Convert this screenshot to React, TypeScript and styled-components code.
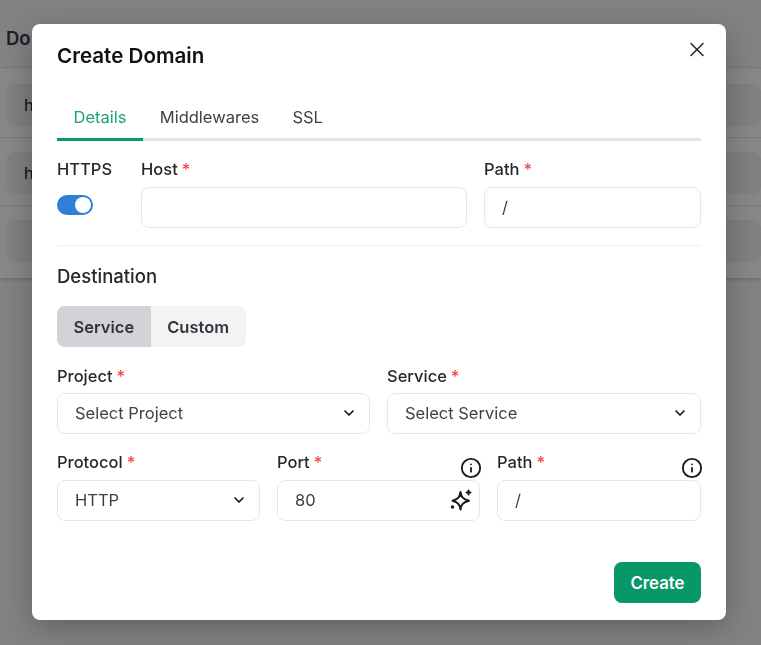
import React from 'react';
import styled, { createGlobalStyle } from 'styled-components';
import { ChevronDown, Info, X } from 'lucide-react';

const GlobalStyle = createGlobalStyle`
  html, body {
    margin: 0;
    height: 100%;
    background: #fff;
    font-family: Inter, "Liberation Sans", sans-serif;
    color: #18181b;
  }
  * { box-sizing: border-box; }
`;

// page behind the dialog, only the part that shows past the modal has text
const Page = styled.div`
  height: 645px;
  overflow: hidden;
  background: #f6f6f6;
  padding-top: 28px;
`;

const PageTitle = styled.h2`
  margin: 0 0 0 6px;
  height: 40px;
  font-size: 18.5px;
  line-height: 20px;
  font-weight: 600;
  color: #3a3a46;
`;

const Panel = styled.div`
  background: #fff;
  height: 210px;
  padding-top: 15px;
  border-top: 1px solid #f0f0f0;
  box-shadow: 0 1px 4px rgba(0, 0, 0, 0.22);
`;

const PanelRow = styled.div`
  display: flex;
  align-items: center;
  height: 42px;
  margin: 0 0 26px 7px;
  padding-left: 17px;
  border-radius: 8px;
  background: #f1f1f2;
  font-size: 16.5px;
  position: relative;

  &::after {
    content: '';
    position: absolute;
    left: -7px;
    right: 0;
    bottom: -12px;
    height: 1px;
    background: #e6e6e6;
  }

  &:last-child::after {
    display: none;
  }
`;

const Overlay = styled.div`
  position: fixed;
  inset: 0;
  background: rgba(0, 0, 0, 0.47);
  display: flex;
  align-items: flex-start;
  justify-content: center;
  padding: 24px 35px 0 32px;
`;

const Modal = styled.div`
  position: relative;
  width: 694px;
  height: 596px;
  padding: 20px 25px 17px;
  background: #fff;
  border-radius: 8px;
  box-shadow: 0 8px 32px rgba(0, 0, 0, 0.28);
  display: flex;
  flex-direction: column;
`;

const Title = styled.h1`
  margin: 0;
  height: 24px;
  font-size: 20.6px;
  line-height: 24px;
  font-weight: 600;
  color: #111114;
`;

const CloseButton = styled.button`
  position: absolute;
  top: 13px;
  right: 17px;
  width: 24px;
  height: 24px;
  padding: 0;
  border: 0;
  background: none;
  display: flex;
  align-items: center;
  justify-content: center;
  color: #222;
`;

const Tabs = styled.div`
  display: flex;
  margin-top: 30px;
  border-bottom: 3px solid #e4e4e6;
  height: 43px;
`;

const Tab = styled.div<{ $active?: boolean }>`
  padding: 0 16.6px 3px;
  margin-bottom: -3px;
  height: 43px;
  display: flex;
  align-items: center;
  font-size: 16.5px;
  color: ${p => (p.$active ? '#1ba672' : '#3f3f46')};
  border-bottom: 3px solid ${p => (p.$active ? '#069868' : 'transparent')};
`;

const TopRow = styled.div`
  display: grid;
  grid-template-columns: 67px 1fr 217px;
  column-gap: 17px;
  margin-top: 16px;
`;

const Field = styled.div`
  position: relative;
  display: flex;
  flex-direction: column;
  min-width: 0;
`;

const Label = styled.label`
  height: 24px;
  margin-bottom: 6px;
  font-size: 16.5px;
  line-height: 24px;
  font-weight: 500;
  color: #27272a;
`;

const Required = styled.span`
  color: #ef4444;
  margin-left: 4px;
`;

const SwitchTrack = styled.div`
  margin-top: 8px;
  width: 36px;
  height: 20px;
  padding: 2px;
  border-radius: 10px;
  background: #2f7fd6;
  display: flex;
  justify-content: flex-end;
`;

const SwitchThumb = styled.div`
  width: 16px;
  height: 16px;
  border-radius: 50%;
  background: #fff;
`;

const InputBox = styled.div`
  height: 41px;
  padding: 0 17px 1px;
  display: flex;
  align-items: center;
  justify-content: space-between;
  border: 1.5px solid #e7e7e9;
  border-radius: 8px;
  background: #fff;
  font-size: 16.5px;
  color: #3f3f46;
`;

const Chevron = styled(ChevronDown)`
  margin-right: -5px;
  color: #111;
`;

const MagicSvg = styled.svg`
  margin-right: -10.5px;
  color: #18181b;
`;

const FieldInfo = styled(Info)`
  position: absolute;
  top: 7px;
  right: -1.5px;
  color: #18181b;
`;

const Divider = styled.div`
  height: 1px;
  margin-top: 17px;
  background: #eeeeef;
`;

const SectionTitle = styled.h3`
  margin: 18px 0 0;
  height: 24px;
  font-size: 18.5px;
  line-height: 24px;
  font-weight: 500;
  color: #27272a;
`;

const Segmented = styled.div`
  align-self: flex-start;
  display: flex;
  margin-top: 18px;
  height: 41px;
  border-radius: 8px;
  overflow: hidden;
  background: #f3f3f4;
`;

const Segment = styled.div<{ $active?: boolean }>`
  display: flex;
  align-items: center;
  padding: 0 16.5px;
  font-size: 16.5px;
  font-weight: 600;
  color: #33333d;
  background: ${p => (p.$active ? '#d2d2d7' : 'transparent')};
`;

const TwoCols = styled.div`
  display: grid;
  grid-template-columns: 313px 314px;
  column-gap: 17px;
  margin-top: 17px;

  ${Label} {
    margin-bottom: 5px;
  }
`;

const ThreeCols = styled.div`
  display: grid;
  grid-template-columns: 203px 203px 204px;
  column-gap: 17px;
  margin-top: 16px;
`;

const Footer = styled.div`
  margin-top: auto;
  display: flex;
  justify-content: flex-end;
`;

const CreateButton = styled.button`
  width: 87px;
  height: 41px;
  border: 0;
  border-radius: 8px;
  background: #069868;
  color: #fff;
  font-family: inherit;
  font-size: 16.8px;
  font-weight: 600;
`;

function MagicIcon() {
  return (
    <MagicSvg width="24" height="24" viewBox="0 0 24 24" fill="none" stroke="currentColor" strokeWidth="2" strokeLinejoin="round" strokeLinecap="round">
      <path d="M11.5 4C12.2 9 13.8 11 20 12.7C13.8 14.4 12.2 16.4 11.5 21.5C10.8 16.4 9.2 14.4 3.5 12.7C9.2 11 10.8 9 11.5 4Z" />
      <path d="M19.5 2.5v4M17.5 4.5h4" />
      <circle cx="3.5" cy="19" r="0.8" />
    </MagicSvg>
  );
}

export default function App() {
  return (
    <>
      <GlobalStyle />
      <Page>
        <PageTitle>Do</PageTitle>
        <Panel>
          <PanelRow>h</PanelRow>
          <PanelRow>h</PanelRow>
          <PanelRow />
        </Panel>
      </Page>
      <Overlay>
        <Modal>
          <Title>Create Domain</Title>
          <CloseButton aria-label="Close">
            <X size={25} strokeWidth={1.5} />
          </CloseButton>

          <Tabs>
            <Tab $active>Details</Tab>
            <Tab>Middlewares</Tab>
            <Tab>SSL</Tab>
          </Tabs>

          <TopRow>
            <Field>
              <Label>HTTPS</Label>
              <SwitchTrack>
                <SwitchThumb />
              </SwitchTrack>
            </Field>
            <Field>
              <Label>Host<Required>*</Required></Label>
              <InputBox />
            </Field>
            <Field>
              <Label>Path<Required>*</Required></Label>
              <InputBox>/</InputBox>
            </Field>
          </TopRow>

          <Divider />
          <SectionTitle>Destination</SectionTitle>

          <Segmented>
            <Segment $active>Service</Segment>
            <Segment>Custom</Segment>
          </Segmented>

          <TwoCols>
            <Field>
              <Label>Project<Required>*</Required></Label>
              <InputBox>
                <span>Select Project</span>
                <Chevron size={16} strokeWidth={2.5} />
              </InputBox>
            </Field>
            <Field>
              <Label>Service<Required>*</Required></Label>
              <InputBox>
                <span>Select Service</span>
                <Chevron size={16} strokeWidth={2.5} />
              </InputBox>
            </Field>
          </TwoCols>

          <ThreeCols>
            <Field>
              <Label>Protocol<Required>*</Required></Label>
              <InputBox>
                <span>HTTP</span>
                <Chevron size={16} strokeWidth={2.5} />
              </InputBox>
            </Field>
            <Field>
              <Label>Port<Required>*</Required></Label>
              <FieldInfo size={22} strokeWidth={2} />
              <InputBox>
                <span>80</span>
                <MagicIcon />
              </InputBox>
            </Field>
            <Field>
              <Label>Path<Required>*</Required></Label>
              <FieldInfo size={22} strokeWidth={2} />
              <InputBox>/</InputBox>
            </Field>
          </ThreeCols>

          <Footer>
            <CreateButton>Create</CreateButton>
          </Footer>
        </Modal>
      </Overlay>
    </>
  );
}
